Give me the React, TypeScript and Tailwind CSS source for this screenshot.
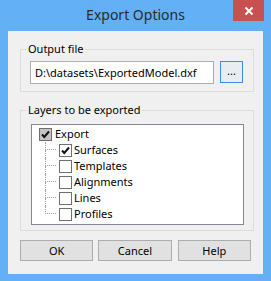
import { Fragment } from "react"

type Layer = {
  name: string
  checked: boolean
}

const layers: Layer[] = [
  { name: "Surfaces", checked: true },
  { name: "Templates", checked: false },
  { name: "Alignments", checked: false },
  { name: "Lines", checked: false },
  { name: "Profiles", checked: false },
]

function CheckBox({ checked, gray }: { checked: boolean; gray?: boolean }) {
  return (
    <span
      className={`w-[13px] h-[13px] shrink-0 border border-[#707070] flex items-center justify-center ${
        gray ? "bg-[#c4c4c4]" : "bg-white"
      }`}
    >
      {checked && (
        <svg width="11" height="11" viewBox="0 0 11 11">
          <path d="M2 5.5 L4.3 8 L9 2.5" fill="none" stroke="#111" strokeWidth="2" />
        </svg>
      )}
    </span>
  )
}

export default function App() {
  return (
    <div className="w-[271px] h-[281px] bg-[#63b0f6] flex flex-col font-['Noto_Sans',sans-serif] text-[11px] leading-4 text-black">
      {/* title bar */}
      <div className="h-[31px] grid grid-cols-[1fr_auto_1fr] items-start">
        <div />
        <div className="pt-[5px] text-[14px] leading-5 text-[#2b2b2b]">Export Options</div>
        <div className="flex justify-end pr-[7px]">
          <button className="w-[31px] h-[21px] bg-[#c75050] flex items-center justify-center">
            <svg width="10" height="10" viewBox="0 0 10 10">
              <path d="M1.5 1.5 L8.5 8.5 M8.5 1.5 L1.5 8.5" stroke="white" strokeWidth="2" />
            </svg>
          </button>
        </div>
      </div>

      {/* client area */}
      <div className="flex-1 mx-[8px] mb-[7px] bg-[#f0f0f0] px-[12px] pt-[10px]">
        <fieldset className="border border-[#dcdcdc] w-[234px]">
          <legend className="ml-[5px] px-[2px] leading-4">Output file</legend>
          <div className="flex items-start pt-[4px] pl-[9px] pr-[10px] pb-[7px] gap-[6px]">
            <div className="w-[184px] h-[23px] border border-[#abadb3] bg-white flex items-center pl-[4px]">
              D:\datasets\ExportedModel.dxf
            </div>
            <button className="w-[23px] h-[22px] border border-[#3c8fe6] bg-[#e8edf2] flex items-end justify-center leading-none pb-[6px]">
              ...
            </button>
          </div>
        </fieldset>

        <fieldset className="border border-[#dcdcdc] w-[234px] mt-[10px]">
          <legend className="ml-[5px] px-[2px] leading-4">Layers to be exported</legend>
          <div className="pt-[6px] pl-[10px] pr-[9px] pb-[5px]">
            <div className="w-[213px] h-[101px] border border-[#828790] bg-white pt-[1px]">
              <div className="h-4 flex items-center pl-[7px]">
                <CheckBox checked gray />
                <span className="ml-[3px]">Export</span>
              </div>
              {layers.map((l, i) => (
                <Fragment key={l.name}>
                  <div className="h-4 flex items-center pl-[13px]">
                    <div className="w-[14px] h-4 flex flex-col shrink-0">
                      <div className="h-2 border-l border-b border-dotted border-[#a0a0a0] w-[11px]" />
                      <div
                        className={`h-2 border-dotted border-[#a0a0a0] ${
                          i < layers.length - 1 ? "border-l" : ""
                        }`}
                      />
                    </div>
                    <CheckBox checked={l.checked} />
                    <span className="ml-[2px]">{l.name}</span>
                  </div>
                </Fragment>
              ))}
            </div>
          </div>
        </fieldset>

        <div className="flex mt-[9px]">
          <button className="w-[74px] h-[21px] border border-[#adadad] bg-[#e1e1e1]">OK</button>
          <button className="w-[74px] h-[21px] border border-[#adadad] bg-[#e1e1e1] ml-[5px]">Cancel</button>
          <button className="w-[74px] h-[21px] border border-[#adadad] bg-[#e1e1e1] ml-[6px]">Help</button>
        </div>
      </div>
    </div>
  )
}
